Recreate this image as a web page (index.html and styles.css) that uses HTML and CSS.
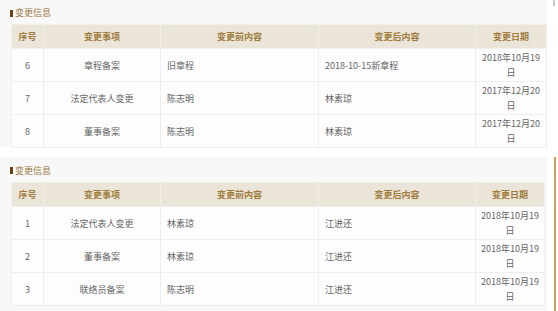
FILE: index.html
```html
<!DOCTYPE html>
<html lang="zh">
<head>
<meta charset="utf-8">
<link rel="stylesheet" href="styles.css">
</head>
<body>
<div class="frame frame-top">
  <section class="panel panel-top">
    <h3 class="title"><span class="mark"></span>变更信息</h3>
    <table class="grid">
      <colgroup>
        <col class="c-no"><col class="c-item"><col class="c-before"><col class="c-after"><col class="c-date">
      </colgroup>
      <thead>
        <tr><th>序号</th><th>变更事项</th><th>变更前内容</th><th>变更后内容</th><th>变更日期</th></tr>
      </thead>
      <tbody>
        <tr><td class="ctr">6</td><td class="ctr">章程备案</td><td>旧章程</td><td>2018-10-15新章程</td><td class="ctr">2018年10月19日</td></tr>
        <tr><td class="ctr">7</td><td class="ctr">法定代表人变更</td><td>陈志明</td><td>林素琼</td><td class="ctr">2017年12月20日</td></tr>
        <tr><td class="ctr">8</td><td class="ctr">董事备案</td><td>陈志明</td><td>林素琼</td><td class="ctr">2017年12月20日</td></tr>
      </tbody>
    </table>
  </section>
  <div class="stub"></div>
</div>
<div class="frame frame-bottom">
  <section class="panel panel-bottom">
    <h3 class="title"><span class="mark"></span>变更信息</h3>
    <table class="grid grid-b">
      <colgroup>
        <col class="c-no"><col class="c-item"><col class="c-before"><col class="c-after"><col class="c-date c-date-b">
      </colgroup>
      <thead>
        <tr><th>序号</th><th>变更事项</th><th>变更前内容</th><th>变更后内容</th><th>变更日期</th></tr>
      </thead>
      <tbody>
        <tr><td class="ctr">1</td><td class="ctr">法定代表人变更</td><td>林素琼</td><td>江进还</td><td class="ctr">2018年10月19日</td></tr>
        <tr><td class="ctr">2</td><td class="ctr">董事备案</td><td>林素琼</td><td>江进还</td><td class="ctr">2018年10月19日</td></tr>
        <tr><td class="ctr">3</td><td class="ctr">联络员备案</td><td>陈志明</td><td>江进还</td><td class="ctr">2018年10月19日</td></tr>
      </tbody>
    </table>
  </section>
  <div class="goldline"></div>
</div>
</body>
</html>
```
FILE: styles.css
```css
html, body {
  margin: 0;
  padding: 0;
  background: #ffffff;
}
body {
  font-family: "Noto Sans CJK SC", "Open Sans", sans-serif;
  font-size: 9px;
  color: #666666;
  width: 558px;
  height: 311px;
  overflow: hidden;
}
.frame {
  display: flex;
  width: 558px;
}
.frame-top {
  height: 147px;
}
.frame-bottom {
  margin-top: 10px;
  height: 154px;
}
.panel {
  width: 547px;
  background: #f8f8f8;
  padding-left: 11px;
  box-sizing: border-box;
}
.stub {
  margin-left: 6px;
  width: 2px;
  height: 6px;
  background: #c9c9c9;
}
.goldline {
  margin-left: 7px;
  width: 2px;
  height: 154px;
  background: #c9a45c;
}
.title {
  margin: 0;
  height: 24px;
  display: flex;
  align-items: center;
  font-size: 9px;
  font-weight: normal;
  color: #9c7a3e;
  line-height: 12px;
  padding-top: 2px;
  box-sizing: border-box;
}
.panel-bottom .title {
  height: 25px;
}
.mark {
  display: inline-block;
  width: 3px;
  height: 7px;
  background: #6e3f17;
  margin-right: 2px;
  margin-left: -1px;
}
.grid {
  border-collapse: collapse;
  table-layout: fixed;
  width: 535px;
}
.grid-b {
  width: 533px;
}
.c-no { width: 32px; }
.c-item { width: 117px; }
.c-before { width: 158px; }
.c-after { width: 157px; }
.c-date { width: 71px; }
.c-date-b { width: 69px; }
.grid th {
  background: #ebe4d8;
  color: #a07c3c;
  font-weight: bold;
  height: 23px;
  padding: 0;
  border: 1px solid #f3f0ea;
  text-align: center;
  line-height: 12px;
}
.grid td {
  background: #fdfdfd;
  border: 1px solid #eeeeee;
  height: 32px;
  padding: 0 6px;
  line-height: 15px;
  text-align: left;
  color: #666666;
}
.grid td.ctr {
  text-align: center;
}
.grid td:last-child {
  padding: 0 4px;
}
```
